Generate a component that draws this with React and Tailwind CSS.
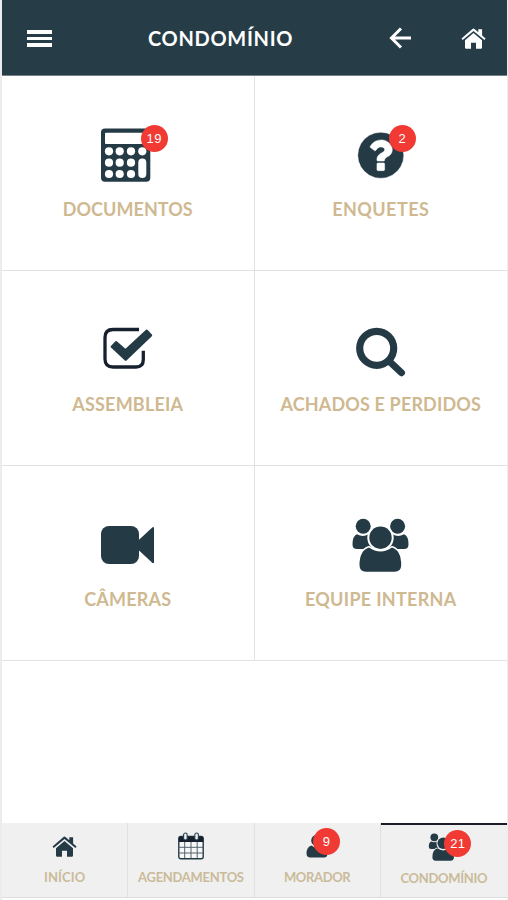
import React from 'react';

const NAVY = '#243b46';

function HouseIcon({ color, className }) {
  return (
    <svg viewBox="0 0 25 21" className={className} fill={color}>
      <path d="M4 12.2 12.5 5l8.5 7.2V19.500q0 1.200-1.200 1.200H15v-6h-5v6H5.200Q4 20.700 4 19.500z" />
      <path d="M.5 10.400 11.500 1q1-.8 2 0L17.300 4.200V1.200h3.800v6.200l3.500 3-1.200 1.500L12.500 2.900 1.700 11.900z" />
    </svg>
  );
}

function CalculatorIcon() {
  const xs = [11, 21.7, 33];
  const ys = [27.3, 38.7, 50];
  return (
    <svg viewBox="0 0 60 60" className="w-[60px] h-[60px]">
      <rect x="3" y="4.500" width="49.300" height="53.300" rx="4" fill={NAVY} />
      <rect x="7" y="8.700" width="41.500" height="11.300" rx="1" fill="#fff" />
      {ys.map((y) => xs.map((x) => <circle key={`${x}-${y}`} cx={x} cy={y} r="4.100" fill="#fff" />))}
      <circle cx="44.300" cy="27.300" r="4.100" fill="#fff" />
      <rect x="40.300" y="34.500" width="8" height="19.600" rx="4" fill="#fff" />
    </svg>
  );
}

function QuestionIcon() {
  return (
    <svg viewBox="0 0 60 60" className="w-[60px] h-[60px]">
      <circle cx="29.500" cy="31" r="20" fill="#fff" />
      <path
        fill={NAVY}
        stroke="#fff"
        strokeWidth="16"
        transform="translate(2.900 4.400) scale(.0300)"
        d="M1024 1376v-192q0-14-9-23t-23-9h-192q-14 0-23 9t-9 23v192q0 14 9 23t23 9h192q14 0 23-9t9-23zm256-672q0-88-55.500-163t-138.500-116-170-41q-243 0-371 213-15 24 8 42l132 100q7 6 19 6 16 0 25-12 53-68 86-92 34-24 86-24 48 0 85.500 26t37.500 59q0 38-20 61t-68 45q-63 28-115.500 86.500t-52.500 125.500v36q0 14 9 23t23 9h192q14 0 23-9t9-23q0-19 21.500-49.500t54.500-49.500q32-18 49-28.500t46-35 44.500-48 28-60.500 12.500-81zm384 192q0 209-103 385.500t-279.500 279.500-385.500 103-385.500-103-279.500-279.500-103-385.500 103-385.500 279.500-279.500 385.500-103 385.500 103 279.500 279.500 103 385.500z"
      />
    </svg>
  );
}

function CheckIcon() {
  return (
    <svg viewBox="0 0 60 60" className="w-[60px] h-[60px]">
      <path d="M41 10.500H15Q7 10.500 7 18.500v21.500Q7 48 15 48H38q7.300 0 7.300-7.500V31.700" fill="none" stroke="#17202f" strokeWidth="3.300" />
      <path d="M18 23.200 27.500 31.500 48.800 11.700 53 16.300 27.700 40.700 13.800 27.700z" fill={NAVY} stroke={NAVY} strokeWidth="2.400" strokeLinejoin="round" />
    </svg>
  );
}

function SearchIcon() {
  return (
    <svg viewBox="0 0 60 60" className="w-[60px] h-[60px]" fill="none" stroke={NAVY} strokeLinecap="round">
      <circle cx="25.700" cy="29.300" r="17" strokeWidth="7.200" />
      <path d="m38.500 42.500 12 11.200" strokeWidth="7" />
    </svg>
  );
}

function CameraIcon() {
  return (
    <svg viewBox="0 0 60 60" className="w-[60px] h-[60px]" fill={NAVY}>
      <rect x="3" y="12" width="38" height="38" rx="8" />
      <path d="M39 25.500h2.300L54.500 13.300H56V49H54.500L41.300 36.800H39z" />
    </svg>
  );
}

function PeopleIcon({ className, gap = '#fff' }) {
  return (
    <svg viewBox="0 0 60 60" className={className} fill={NAVY}>
      <circle cx="12.200" cy="12.300" r="7.500" />
      <circle cx="46.600" cy="12.300" r="7.500" />
      <path d="M6 20.300Q12 23.500 17.500 20.300L22 35H6q-4.500 0-4.500-4.500Q1.500 22 6 20.300z" />
      <path d="M53 20.300Q47 23.500 41.500 20.300L37 35H53q4.500 0 4.500-4.500Q57.500 22 53 20.300z" />
      <path d="M18 33.500Q29.500 41.500 41 33.500q9.200 3 9.200 17.500 0 6.700-6.700 6.700h-28.500q-6.500 0-6.500-6.700Q8.500 36.500 18 33.500z" stroke={gap} strokeWidth="3" paintOrder="stroke" />
      <circle cx="29.500" cy="23.700" r="11.200" stroke={gap} strokeWidth="4" paintOrder="stroke" />
    </svg>
  );
}

function CalendarIcon() {
  return (
    <svg viewBox="0 0 26 28" className="w-[26px] h-[28px]">
      <rect x=".8" y="4.500" width="24.400" height="22.300" rx="2" fill="#f8f8f8" stroke={NAVY} strokeWidth="1.400" />
      <path d="M.8 10V6.500q0-2 2-2h20.400q2 0 2 2V10z" fill="#17202f" />
      <path d="M1 15.300h24M1 21h24M6.700 10v16M13 10v16M19.200 10v16" stroke="#52636d" strokeWidth="1" />
      <rect x="5.600" y="1" width="3.600" height="7" rx="1.800" fill="#f0f0f0" stroke={NAVY} strokeWidth="1.100" />
      <rect x="16.800" y="1" width="3.600" height="7" rx="1.800" fill="#f0f0f0" stroke={NAVY} strokeWidth="1.100" />
    </svg>
  );
}

function PersonIcon() {
  return (
    <svg viewBox="0 0 22 26" className="w-[22px] h-[26px]" fill={NAVY}>
      <circle cx="11" cy="7.500" r="5.800" />
      <path d="M5.500 12.500q5.500 4.500 11 0Q21.500 14 21.500 20.500q0 4-3.500 4H4.500q-4 0-4-4Q.5 14 5.500 12.500z" />
    </svg>
  );
}

function Badge({ children, className }) {
  return (
    <span className={`absolute flex items-center justify-center w-[27px] h-[27px] rounded-full bg-[#f03a33] text-white text-[13px] leading-none tracking-[0.5px] font-['Liberation_Sans',sans-serif] ${className}`}>
      {children}
    </span>
  );
}

const tiles = [
  { label: 'DOCUMENTOS', icon: <CalculatorIcon />, badge: 19, badgePos: 'left-[43px] top-[1px]', spacing: 'tracking-[0.05px]' },
  { label: 'ENQUETES', icon: <QuestionIcon />, badge: 2, badgePos: 'left-[38px] top-[1px]', spacing: 'tracking-[0.45px]' },
  { label: 'ASSEMBLEIA', icon: <CheckIcon />, spacing: 'tracking-[0.2px]' },
  { label: 'ACHADOS E PERDIDOS', icon: <SearchIcon />, spacing: 'tracking-[0.15px]' },
  { label: 'CÂMERAS', icon: <CameraIcon />, spacing: 'tracking-[0.2px]' },
  { label: 'EQUIPE INTERNA', icon: <PeopleIcon className="w-[60px] h-[60px]" />, spacing: 'tracking-[0.3px]' },
];

const tabs = [
  { label: 'INÍCIO', icon: <HouseIcon color={NAVY} className="w-[25px] h-[21px]" />, spacing: 'tracking-[0.1px]' },
  { label: 'AGENDAMENTOS', icon: <CalendarIcon />, spacing: 'tracking-[-0.3px]' },
  { label: 'MORADOR', icon: <PersonIcon />, badge: 9, badgePos: 'left-[7px] top-[-5px]', spacing: 'tracking-[-0.35px]' },
  { label: 'CONDOMÍNIO', icon: <PeopleIcon className="w-[31px] h-[31px]" gap="#f0f0f0" />, badge: 21, badgePos: 'left-[16px] top-[-1px]', active: true, spacing: 'tracking-[-0.3px]' },
];

export default function App() {
  return (
    <div className="w-[508px] h-[900px] bg-white border-l-2 border-r border-[#ececee] flex flex-col overflow-hidden font-[Lato,sans-serif]">
      <header className="h-[76px] shrink-0 bg-[#263d48] flex items-center border-b border-[#74808a] text-white">
        <button className="ml-[25px] mt-[2px] w-[25px] flex flex-col gap-[3px]" aria-label="Menu">
          <span className="h-[3.500px] bg-white" />
          <span className="h-[3.500px] bg-white" />
          <span className="h-[3.500px] bg-white" />
        </button>
        <h1 className="ml-[96px] w-[146px] text-[20px] font-bold whitespace-nowrap tracking-[0.7px]">CONDOMÍNIO</h1>
        <svg viewBox="0 0 22 22" className="ml-[95px] w-[22px] h-[22px]" fill="none" stroke="#fff" strokeWidth="3">
          <path d="M12 1.500 2.500 11l9.500 9.500M2.500 11H22" />
        </svg>
        <HouseIcon color="#fff" className="ml-[50px] mt-px w-[25px] h-[21px]" />
      </header>

      <main className="grid grid-cols-2 auto-rows-[195px]">
        {tiles.map((tile) => (
          <div key={tile.label} className="flex flex-col items-center pt-[48px] border-b border-r border-[#e2e2e2] even:border-r-0">
            <div className="relative">
              {tile.icon}
              {tile.badge && <Badge className={tile.badgePos}>{tile.badge}</Badge>}
            </div>
            <span className={`mt-[14px] text-[18px] leading-[22px] font-bold whitespace-nowrap text-[#cfb991] ${tile.spacing}`}>{tile.label}</span>
          </div>
        ))}
      </main>

      <nav className="mt-auto mb-[2px] h-[75px] grid grid-cols-4 bg-[#f0f0f0] border-b border-[#dedede]">
        {tabs.map((tab) => (
          <div
            key={tab.label}
            className={`flex flex-col items-center border-r border-[#e0e0e0] last:border-r-0 ${tab.active ? 'border-t-2 border-t-[#1c1b29]' : ''}`}
          >
            <div className={`flex items-center ${tab.active ? 'h-[45px] pb-[2px]' : 'h-[46px]'}`}>
              <div className="relative">
                {tab.icon}
                {tab.badge && <Badge className={tab.badgePos}>{tab.badge}</Badge>}
              </div>
            </div>
            <span className={`text-[13px] leading-[16px] font-bold whitespace-nowrap text-[#cabb99] ${tab.spacing}`}>{tab.label}</span>
          </div>
        ))}
      </nav>
    </div>
  );
}
